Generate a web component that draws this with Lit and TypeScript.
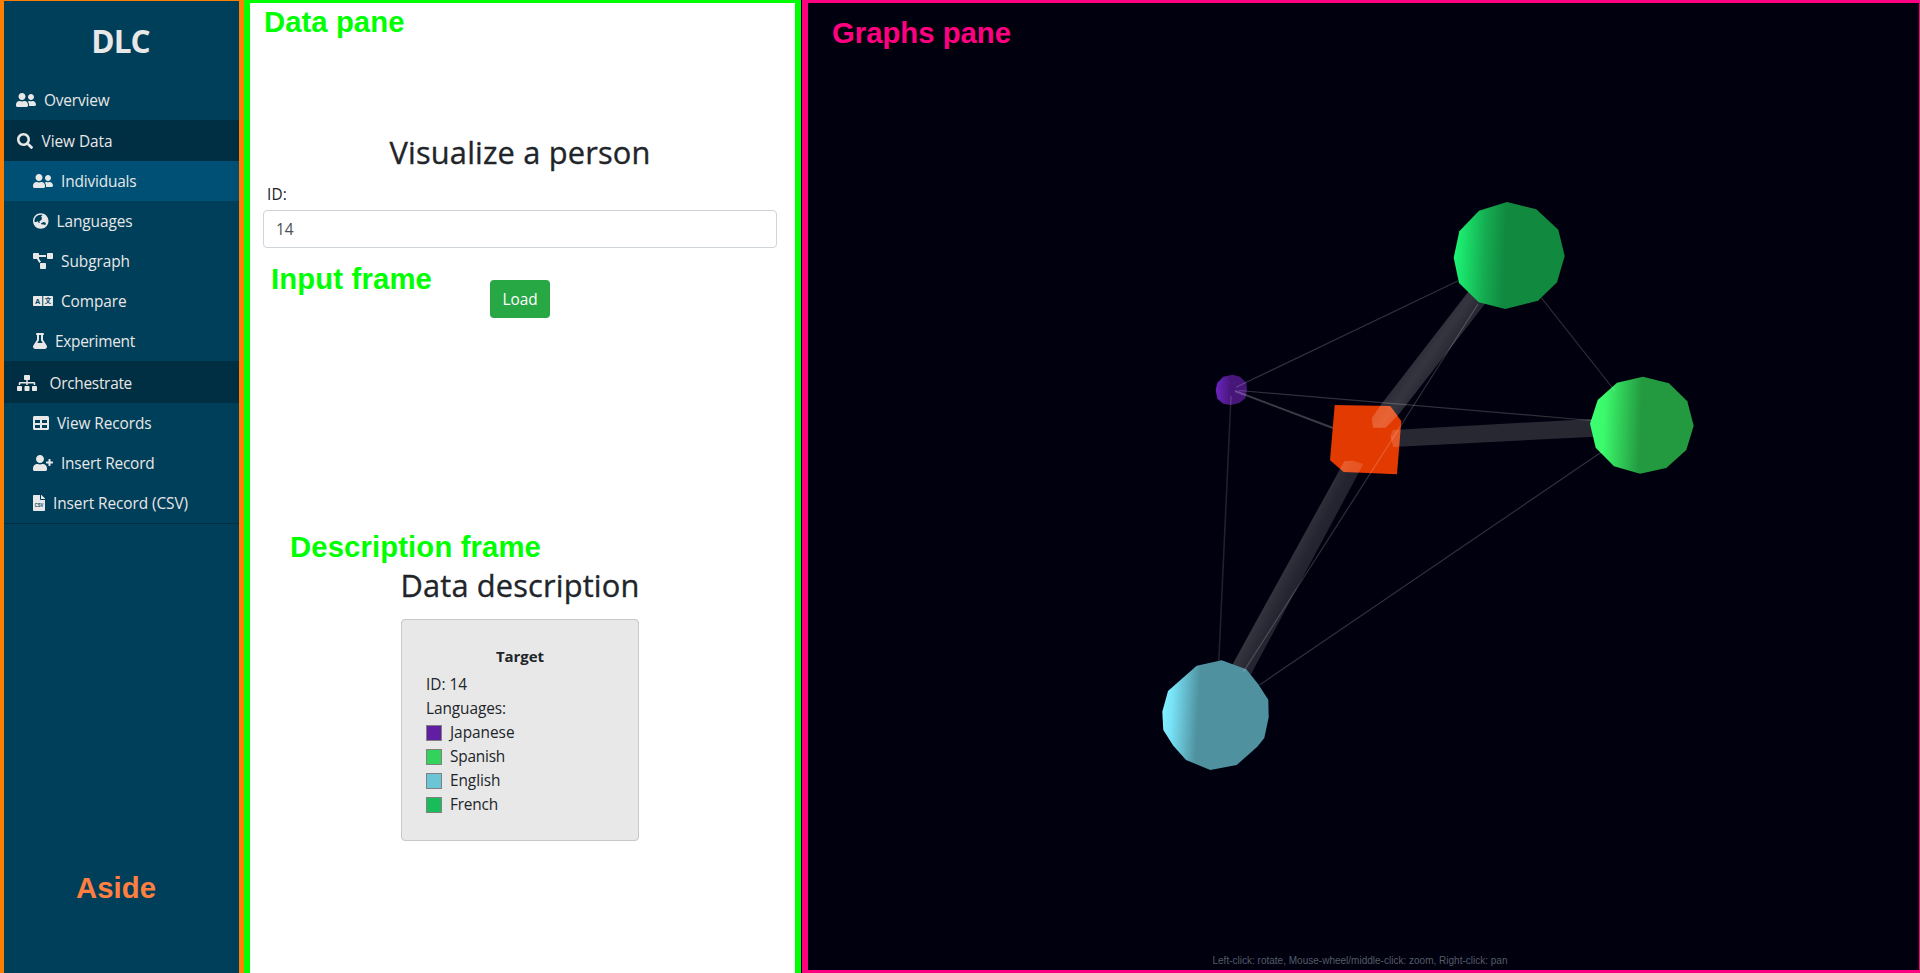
import { LitElement, html, svg, css } from "lit";
import { customElement, property } from "lit/decorators.js";

/* A run of text whose tracking is adjusted so that it takes exactly `w` pixels. */
@customElement("fit-text")
class FitText extends LitElement {
  @property({ type: Number }) w = 0;
  @property() text = "";
  static styles = css`
    :host { display: inline-block; white-space: pre; }
    span { display: inline-block; }
  `;
  render() {
    return html`<span>${this.text}</span>`;
  }
  updated() {
    const el = this.renderRoot.querySelector("span") as HTMLElement;
    el.style.letterSpacing = "0px";
    const natural = el.getBoundingClientRect().width;
    const gap = (this.w - natural) / this.text.length;
    el.style.letterSpacing = gap.toFixed(3) + "px";
  }
}

const friends = "M192 256c61.9 0 112-50.1 112-112S253.9 32 192 32 80 82.1 80 144s50.1 112 112 112zm76.8 32h-8.3c-20.8 10-43.9 16-68.5 16s-47.6-6-68.5-16h-8.3C51.6 288 0 339.6 0 403.2V432c0 26.5 21.5 48 48 48h288c26.5 0 48-21.5 48-48v-28.8c0-63.6-51.6-115.2-115.2-115.2zM480 256c53 0 96-43 96-96s-43-96-96-96-96 43-96 96 43 96 96 96zm48 32h-3.8c-13.9 4.8-28.6 8-44.2 8s-30.3-3.2-44.2-8H432c-20.4 0-39.2 5.9-55.7 15.4 24.4 26.3 39.7 61.2 39.7 99.8v38.4c0 2.2-.5 4.3-.6 6.4H592c26.5 0 48-21.5 48-48 0-61.9-50.1-112-112-112z";

const icons: Record<string, { w: number; body: unknown }> = {
  friends: { w: 640, body: svg`<path d=${friends} />` },
  search: { w: 512, body: svg`<path d="M505 442.7L405.3 343c-4.5-4.5-10.6-7-17-7H372c27.6-35.3 44-79.7 44-128C416 93.1 322.9 0 208 0S0 93.1 0 208s93.1 208 208 208c48.3 0 92.7-16.4 128-44v16.3c0 6.4 2.5 12.5 7 17l99.7 99.7c9.4 9.4 24.6 9.4 33.9 0l28.3-28.3c9.4-9.4 9.4-24.6.1-34zM208 336c-70.7 0-128-57.2-128-128 0-70.7 57.2-128 128-128 70.7 0 128 57.2 128 128 0 70.7-57.2 128-128 128z" />` },
  globe: { w: 496, body: svg`<path d="M248 8C111.03 8 0 119.03 0 256s111.03 248 248 248 248-111.03 248-248S384.97 8 248 8zm-11.34 240.23c-2.89 4.82-8.1 7.77-13.72 7.77h-.31c-4.24 0-8.31 1.69-11.31 4.69l-5.66 5.66c-3.12 3.12-3.12 8.19 0 11.31l5.66 5.66c3 3 4.69 7.07 4.69 11.31V304c0 8.84-7.16 16-16 16h-6.11c-6.06 0-11.6-3.42-14.31-8.85l-22.62-45.23c-2.44-4.88-8.95-5.94-12.81-2.08l-19.47 19.46c-3 3-7.07 4.69-11.31 4.69H50.81C49.12 277.55 48 266.92 48 256c0-110.28 89.72-200 200-200 21.51 0 42.2 3.51 61.63 9.82l-50.16 38.53c-5.11 3.41-4.63 11.06.86 13.81l10.83 5.41c5.42 2.71 8.84 8.25 8.84 14.31V216c0 4.42-3.58 8-8 8h-3.06c-3.03 0-5.8-1.71-7.15-4.42-1.56-3.12-5.96-3.29-7.76-.3l-17.37 28.95zM408 358.43c0 4.24-1.69 8.31-4.69 11.31l-9.57 9.57c-3 3-7.07 4.69-11.31 4.69h-15.16c-4.24 0-8.31-1.69-11.31-4.69l-13.01-13.01a26.767 26.767 0 0 0-25.42-7.04l-21.27 5.32c-1.27.32-2.57.48-3.88.48h-10.34c-4.24 0-8.31-1.69-11.31-4.69l-11.91-11.91a8.008 8.008 0 0 1-2.34-5.66v-10.2c0-3.27 1.99-6.21 5.03-7.43l39.34-15.74c1.98-.79 3.86-1.82 5.59-3.05l23.71-16.89a7.978 7.978 0 0 1 4.64-1.48h12.09c3.23 0 6.15 1.94 7.39 4.93l5.35 12.85a4 4 0 0 0 3.69 2.46h3.8c1.78 0 3.35-1.18 3.84-2.88l4.2-14.47c.5-1.71 2.06-2.88 3.84-2.88h6.06c2.21 0 4 1.79 4 4v12.93c0 2.12.84 4.16 2.34 5.66l11.91 11.91c3 3 4.69 7.07 4.69 11.31v24.6z" />` },
  diagram: { w: 640, body: svg`<path d="M384 320H256c-17.67 0-32 14.33-32 32v128c0 17.67 14.33 32 32 32h128c17.67 0 32-14.33 32-32V352c0-17.67-14.33-32-32-32zM192 32c0-17.67-14.33-32-32-32H32C14.33 0 0 14.33 0 32v128c0 17.67 14.33 32 32 32h95.72l73.16 128.04C211.98 300.98 232.4 288 256 288h.28L192 175.51V128h224V64H192V32zM608 0H480c-17.67 0-32 14.33-32 32v128c0 17.67 14.33 32 32 32h128c17.67 0 32-14.33 32-32V32c0-17.67-14.33-32-32-32z" />` },
  language: { w: 640, body: svg`
    <path d="M24 96h272v320H24c-13 0-24-11-24-24V120c0-13 11-24 24-24zM328 96h288c13 0 24 11 24 24v272c0 13-11 24-24 24H328z" />
    <text class="cut" x="150" y="340" font-size="235" text-anchor="middle" font-family="Liberation Sans" font-weight="700">A</text>
    <text class="cut" x="482" y="332" font-size="205" text-anchor="middle" font-family="Noto Sans CJK SC" font-weight="700">文</text>` },
  flask: { w: 448, body: svg`<path d="M437.2 403.5L320 215V64h8c13.3 0 24-10.7 24-24V24c0-13.3-10.7-24-24-24H120c-13.3 0-24 10.7-24 24v16c0 13.3 10.7 24 24 24h8v151L10.8 403.5C-18.5 450.6 15.3 512 70.9 512h306.2c55.7 0 89.4-61.5 60.1-108.5zM137.9 320l48.2-77.6c3.7-5.2 5.8-11.6 5.8-18.4V64h64v160c0 6.9 2.2 13.2 5.8 18.4l48.2 77.6h-172z" />` },
  sitemap: { w: 640, body: svg`<path d="M128 352H32c-17.67 0-32 14.33-32 32v96c0 17.67 14.33 32 32 32h96c17.67 0 32-14.33 32-32v-96c0-17.67-14.33-32-32-32zm-24-80h192v48h48v-48h192v48h48v-57.59c0-21.17-17.23-38.41-38.41-38.41H344v-64h40c17.67 0 32-14.33 32-32V32c0-17.67-14.33-32-32-32H256c-17.67 0-32 14.33-32 32v96c0 17.67 14.33 32 32 32h40v64H94.41C73.23 224 56 241.23 56 262.41V320h48v-48zm264 80h-96c-17.67 0-32 14.33-32 32v96c0 17.67 14.33 32 32 32h96c17.67 0 32-14.33 32-32v-96c0-17.67-14.33-32-32-32zm240 0h-96c-17.67 0-32 14.33-32 32v96c0 17.67 14.33 32 32 32h96c17.67 0 32-14.33 32-32v-96c0-17.67-14.33-32-32-32z" />` },
  table: { w: 512, body: svg`<path d="M464 32H48C21.49 32 0 53.49 0 80v352c0 26.51 21.49 48 48 48h416c26.51 0 48-21.49 48-48V80c0-26.51-21.49-48-48-48zM224 416H64v-96h160v96zm0-160H64v-96h160v96zm224 160H288v-96h160v96zm0-160H288v-96h160v96z" />` },
  userplus: { w: 640, body: svg`<path d="M624 208h-64v-64c0-8.8-7.2-16-16-16h-32c-8.8 0-16 7.2-16 16v64h-64c-8.8 0-16 7.2-16 16v32c0 8.8 7.2 16 16 16h64v64c0 8.8 7.2 16 16 16h32c8.8 0 16-7.2 16-16v-64h64c8.8 0 16-7.2 16-16v-32c0-8.8-7.2-16-16-16zm-400 48c70.7 0 128-57.3 128-128S294.7 0 224 0 96 57.3 96 128s57.3 128 128 128zm89.6 32h-16.7c-22.2 10.2-46.9 16-72.9 16s-50.6-5.8-72.9-16h-16.7C60.2 288 0 348.2 0 422.4V464c0 26.5 21.5 48 48 48h352c26.5 0 48-21.5 48-48v-41.6c0-74.2-60.2-134.4-134.4-134.4z" />` },
  csv: { w: 384, body: svg`
    <path d="M224 136V0H24C10.7 0 0 10.7 0 24v464c0 13.3 10.7 24 24 24h336c13.3 0 24-10.7 24-24V160H248c-13.2 0-24-10.8-24-24zm160-14.1v6.1H256V0h6.1c6.4 0 12.5 2.5 17 7l97.9 98c4.5 4.5 7 10.6 7 16.9z" />
    <text class="cut" x="192" y="382" font-size="165" text-anchor="middle" textLength="270" lengthAdjust="spacingAndGlyphs" font-family="Liberation Sans" font-weight="700">CSV</text>` },
};

interface Item { icon: string; label: string; w: number; kind: string; gap: number; }
const items: Item[] = [
  { icon: "friends", label: "Overview", w: 65.5, kind: "top", gap: 8 },
  { icon: "search", label: "View Data", w: 71, kind: "head", gap: 8.5 },
  { icon: "friends", label: "Individuals", w: 75.5, kind: "sub active", gap: 8 },
  { icon: "globe", label: "Languages", w: 76, kind: "sub", gap: 8 },
  { icon: "diagram", label: "Subgraph", w: 69, kind: "sub", gap: 8 },
  { icon: "language", label: "Compare", w: 65.5, kind: "sub", gap: 8 },
  { icon: "flask", label: "Experiment", w: 80, kind: "sub", gap: 8 },
  { icon: "sitemap", label: "Orchestrate", w: 82.5, kind: "head tall", gap: 12.5 },
  { icon: "table", label: "View Records", w: 94.5, kind: "sub", gap: 8 },
  { icon: "userplus", label: "Insert Record", w: 93.5, kind: "sub", gap: 8 },
  { icon: "csv", label: "Insert Record (CSV)", w: 135, kind: "sub", gap: 8 },
];

@customElement("side-nav")
class SideNav extends LitElement {
  static styles = css`
    :host {
      box-sizing: border-box; display: flex; flex-direction: column; width: 244px;
      border: solid #ff8000; border-width: 1px 5px 0 4px; background: #003f5a; color: #e8e8e8;
      font: 15.4px/24px "Open Sans", "Noto Sans", sans-serif;
    }
    .brand { height: 79px; padding-top: 16px; box-sizing: border-box; text-align: center; font-weight: 700; font-size: 31.5px; line-height: 48px; padding-right: 2px; }
    .row { height: 40px; display: flex; align-items: center; box-sizing: border-box; }
    .top { padding-left: 12px; }
    .head { height: 41px; background: #002e42; padding-left: 13px; padding-top: 1px; }
    .tall { height: 42px; padding-top: 2px; }
    .sub { padding-left: 29px; }
    .active { background: #005075; }
    .list { border-bottom: 1px solid #002e42; }
    .row fit-text { padding-top: 2px; }
    svg { height: 16px; display: block; fill: #e8e8e8; flex: none; }
    .cut { fill: #003f5a; }
  `;
  render() {
    return html`
      <div class="brand"><fit-text .text=${"DLC"} .w=${58.5}></fit-text></div>
      <div class="list">
        ${items.map((i) => {
          const ic = icons[i.icon];
          return html`<div class="row ${i.kind}">
            <svg viewBox="0 0 ${ic.w} 512" width=${ic.w / 32} height="16">${ic.body}</svg>
            <fit-text style="margin-left:${i.gap}px" .text=${i.label} .w=${i.w}></fit-text>
          </div>`;
        })}
      </div>`;
  }
}

const langs = [
  { name: "Japanese", w: 64.5, c: "#611ea3" },
  { name: "Spanish", w: 55, c: "#32d25b" },
  { name: "English", w: 50.5, c: "#6bc5d6" },
  { name: "French", w: 48, c: "#18bc5a" },
];

@customElement("data-pane")
class DataPane extends LitElement {
  static styles = css`
    :host {
      box-sizing: border-box; display: flex; flex-direction: column; align-items: center; width: 557px;
      border: solid #00ff00; border-width: 3px 6px 0 6px; background: #fff; color: #212529;
      font: 15.4px/24px "Open Sans", "Noto Sans", sans-serif; padding: 130px 18px 0 13px;
    }
    h2 { margin: 0; font-size: 30.8px; line-height: 38px; font-weight: 500; -webkit-text-stroke: 0.35px #212529; }
    .form { align-self: stretch; display: flex; flex-direction: column; margin-top: 11px; }
    label { padding: 1px 0 0 4px; height: 27px; }
    .input { box-sizing: border-box; height: 38px; border: 1px solid #ced4da; border-radius: 4px; padding: 7px 12px 5px; color: #495057; }
    .btn { align-self: center; margin-top: 32px; height: 38px; width: 60px; border: 0; border-radius: 4px; background: #28a745; color: #fff; font: inherit; padding: 2px 0 0; }
    .desc { margin-top: 248px; }
    .card { box-sizing: border-box; width: 238px; height: 222px; margin-top: 15px; padding: 24px; border: 1px solid #c8c8c8; border-radius: 4px; background: #e8e8e8; }
    .target { text-align: center; font-weight: 700; font-size: 15px; margin: 0 0 5px; }
    .line { display: flex; align-items: center; gap: 8px; height: 24px; }
    .swatch { box-sizing: border-box; width: 16px; height: 16px; border: 1px solid #808080; }
  `;
  render() {
    return html`
      <h2><fit-text .text=${"Visualize a person"} .w=${261}></fit-text></h2>
      <div class="form">
        <label><fit-text .text=${"ID:"} .w=${20}></fit-text></label>
        <div class="input"><fit-text .text=${"14"} .w=${17.5}></fit-text></div>
        <button class="btn"><fit-text .text=${"Load"} .w=${35}></fit-text></button>
      </div>
      <h2 class="desc"><fit-text .text=${"Data description"} .w=${239}></fit-text></h2>
      <div class="card">
        <div class="target"><fit-text .text=${"Target"} .w=${48}></fit-text></div>
        <div class="line"><fit-text .text=${"ID: 14"} .w=${41}></fit-text></div>
        <div class="line"><fit-text .text=${"Languages:"} .w=${80}></fit-text></div>
        ${langs.map((l) => html`<div class="line">
          <span class="swatch" style="background:${l.c}"></span>
          <fit-text .text=${l.name} .w=${l.w}></fit-text>
        </div>`)}
      </div>`;
  }
}

@customElement("graph-pane")
class GraphPane extends LitElement {
  static styles = css`
    :host {
      box-sizing: border-box; flex: 1; display: grid; grid-template: 1fr / 1fr; margin-left: 1px;
      border: solid #ff0080; border-width: 3px 1px 3px 6px; background: #00000e;
    }
    svg, .hint { grid-area: 1 / 1; }
    svg { display: block; width: 1111px; height: 967px; }
    .hint { align-self: end; justify-self: center; font: 10px/12px "Liberation Sans", Arial, sans-serif; color: #565c6a; margin: 0 7px 3px 0; }
    .edge { stroke: #fff; stroke-opacity: 0.19; fill: none; stroke-width: 1.2; }
    .thick { stroke-width: 2; stroke-opacity: 0.23; }
    .faint { stroke-width: 1.6; stroke-opacity: 0.13; }
  `;
  render() {
    return html`
      <svg viewBox="808 3 1111 967">
        <defs>
          <linearGradient id="french" gradientUnits="userSpaceOnUse" x1="1454" y1="260" x2="1504" y2="262">
            <stop offset="0" stop-color="#1df476" /><stop offset=".2" stop-color="#1ae069" />
            <stop offset=".6" stop-color="#15ad52" /><stop offset="1" stop-color="#118a40" />
          </linearGradient>
          <linearGradient id="spanish" gradientUnits="userSpaceOnUse" x1="1592" y1="424" x2="1641" y2="426">
            <stop offset="0" stop-color="#3dff72" /><stop offset=".25" stop-color="#3bf96b" />
            <stop offset=".6" stop-color="#30cb57" /><stop offset="1" stop-color="#239940" />
          </linearGradient>
          <linearGradient id="english" gradientUnits="userSpaceOnUse" x1="1163" y1="711" x2="1198" y2="713">
            <stop offset="0" stop-color="#80f0ff" /><stop offset=".25" stop-color="#78e2f6" />
            <stop offset=".6" stop-color="#65bccd" /><stop offset="1" stop-color="#4f919f" />
          </linearGradient>
          <linearGradient id="japanese" gradientUnits="userSpaceOnUse" x1="1216" y1="0" x2="1231" y2="0">
            <stop offset="0" stop-color="#6c24c0" /><stop offset="1" stop-color="#471679" />
          </linearGradient>
          <linearGradient id="barA" gradientUnits="userSpaceOnUse" x1="1402" y1="378" x2="1425" y2="394">
            <stop offset="0" stop-color="#fff" stop-opacity=".18" /><stop offset=".35" stop-color="#fff" stop-opacity=".21" />
            <stop offset="1" stop-color="#fff" stop-opacity=".14" />
          </linearGradient>
          <linearGradient id="barB" gradientUnits="userSpaceOnUse" x1="1282" y1="572" x2="1304" y2="583">
            <stop offset="0" stop-color="#fff" stop-opacity=".2" /><stop offset=".6" stop-color="#fff" stop-opacity=".145" />
            <stop offset="1" stop-color="#fff" stop-opacity=".135" />
          </linearGradient>
        </defs>
        <polygon fill="#e23a00" points="1334.7,405 1390.3,406 1401.3,421 1397,474.3 1343.7,472 1330,460.3" />
        <polygon fill="url(#barA)" points="1475,283 1380.7,405 1371.7,418.3 1373,427.7 1385.7,427.7 1398.3,415 1449,350 1492,295" />
        <polygon fill="#fff" fill-opacity=".155" points="1600,418.5 1392.7,430 1390.3,436.7 1393.3,447 1600,436.4" />
        <polygon fill="url(#barB)" points="1344.3,461.3 1353,460.7 1363.3,464 1251.7,673 1245,685 1226,676 1232.7,664" />
        <polygon fill="url(#french)" points="1507,202 1536.3,209.3 1558.3,229.7 1564.7,256 1557,282.3 1538,300.7 1505.3,309 1478.7,302.3 1459,283 1453.7,257.7 1459.3,231.3 1479,210.7" />
        <polygon fill="url(#spanish)" points="1643,376.7 1669,383.3 1687.3,401.3 1693.7,425.7 1686.3,450 1666.3,468 1640,473.7 1614,466.3 1595.7,447.7 1590,423.7 1597.7,400 1617,382.7" />
        <polygon fill="url(#english)" points="1221.7,660.3 1246.3,669.3 1258.3,684.3 1268.3,699.7 1268.7,717.3 1264.3,738 1257.3,746.7 1236.7,765 1210.3,770 1186,760 1173.3,745.7 1163.3,730 1162.3,711.7 1168,691 1196.7,665.7" />
        <polygon fill="url(#japanese)" points="1232.7,374.7 1240,376.7 1246.3,382.7 1247,390 1245.3,398.3 1239.3,403 1231,405 1223.3,403.7 1217.3,398.7 1215.7,390 1217.3,382.7 1223.3,376.7" />
        <path class="edge" d="M1236 387.3L1457.7 281" />
        <path class="edge" d="M1239 390.5L1592 420.5" />
        <path class="edge thick" d="M1235 391L1333 428" />
        <path class="edge faint" d="M1231 396L1218.8 661" />
        <path class="edge" d="M1541.5 298L1615 391" />
        <path class="edge" d="M1603 451L1259.5 685" />
        <path class="edge" d="M1478 304L1391.7 440L1243.3 672" />
      </svg>
      <div class="hint"><fit-text .text=${"Left-click: rotate, Mouse-wheel/middle-click: zoom, Right-click: pan"} .w=${295}></fit-text></div>`;
  }
}

@customElement("app-root")
class AppRoot extends LitElement {
  static styles = css`
    :host { display: flex; position: relative; height: 973px; background: #000; overflow: hidden; }
    .note { position: absolute; font: 700 29.3px/32px "Liberation Sans", Arial, sans-serif; color: #00ff00; }
    .n-data { left: 264px; top: 6px; }
    .n-input { left: 271px; top: 263px; }
    .n-desc { left: 290px; top: 531px; }
    .n-aside { left: 76px; top: 872px; color: #ff7f40; }
    .n-graph { left: 832px; top: 17px; color: #ff0080; }
  `;
  render() {
    return html`
      <side-nav></side-nav>
      <data-pane></data-pane>
      <graph-pane></graph-pane>
      <div class="note n-data"><fit-text .text=${"Data pane"} .w=${140.5}></fit-text></div>
      <div class="note n-input"><fit-text .text=${"Input frame"} .w=${161}></fit-text></div>
      <div class="note n-desc"><fit-text .text=${"Description frame"} .w=${251}></fit-text></div>
      <div class="note n-aside"><fit-text .text=${"Aside"} .w=${80}></fit-text></div>
      <div class="note n-graph"><fit-text .text=${"Graphs pane"} .w=${179}></fit-text></div>`;
  }
}
